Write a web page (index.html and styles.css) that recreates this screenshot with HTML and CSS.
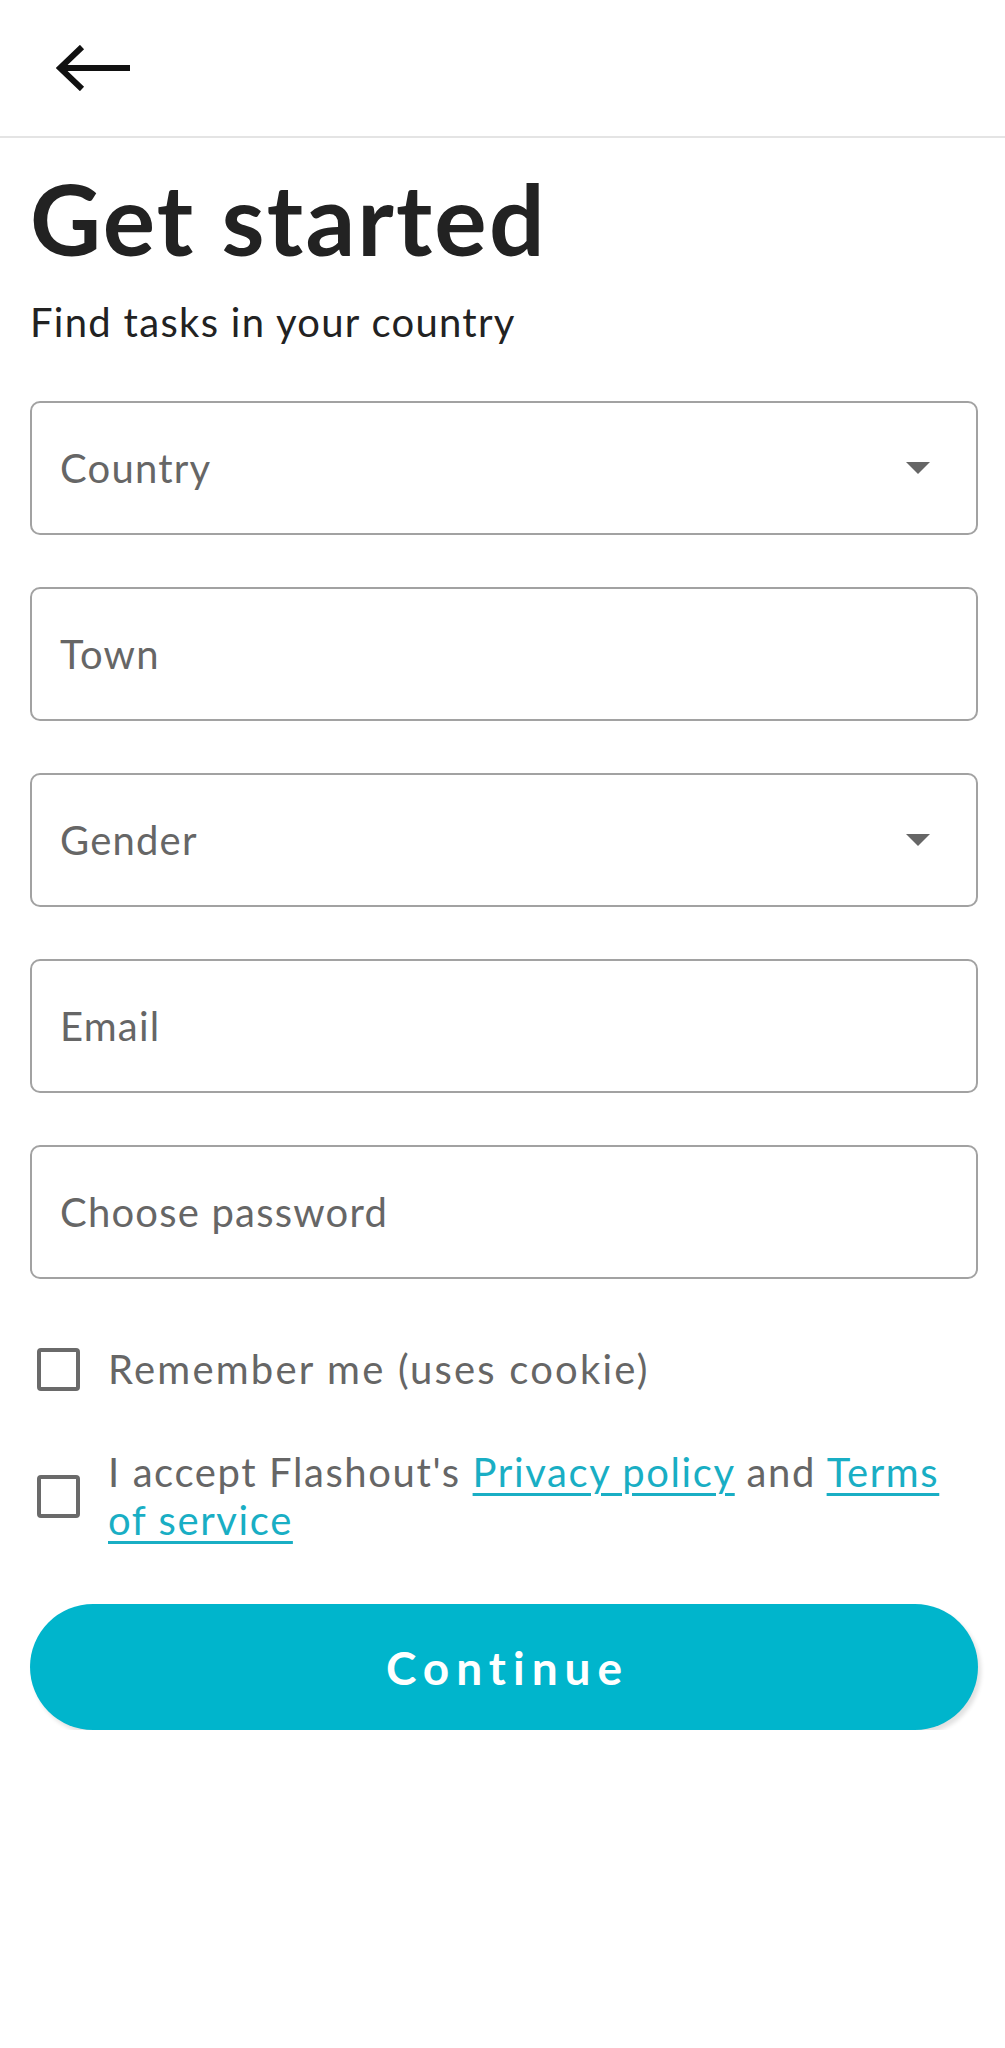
FILE: index.html
```html
<!DOCTYPE html>
<html lang="en">
<head>
<meta charset="utf-8">
<title>Get started</title>
<link rel="stylesheet" href="styles.css">
</head>
<body>
<header class="topbar">
  <button class="back" aria-label="Back">
    <svg width="74" height="46" viewBox="0 0 74 46" fill="none" stroke="#111" stroke-width="6" stroke-linecap="butt" stroke-linejoin="miter">
      <path d="M74 23H6"/>
      <path d="M26 2L4 23L26 44"/>
    </svg>
  </button>
</header>
<main class="content">
  <h1 class="title">Get started</h1>
  <p class="subtitle">Find tasks in your country</p>
  <form class="form">
    <div class="field select"><span class="placeholder">Country</span><span class="caret"></span></div>
    <div class="field"><span class="placeholder">Town</span></div>
    <div class="field select"><span class="placeholder">Gender</span><span class="caret"></span></div>
    <div class="field"><span class="placeholder">Email</span></div>
    <div class="field"><span class="placeholder">Choose password</span></div>
    <label class="check first"><span class="box"></span><span class="label">Remember me (uses cookie)</span></label>
    <label class="check second"><span class="box"></span><span class="label">I accept Flashout's <a href="#">Privacy policy</a> and <a href="#">Terms of service</a></span></label>
    <button type="button" class="continue">Continue</button>
  </form>
</main>
</body>
</html>
```
FILE: styles.css
```css
* { box-sizing: border-box; }
html, body { margin: 0; padding: 0; background: #fff; }
body { font-family: Lato, "Noto Sans", sans-serif; color: #222; }

.topbar {
  height: 138px;
  border-bottom: 2px solid #e4e4e4;
  display: flex;
  align-items: center;
  padding-left: 56px;
}
.back { background: none; border: 0; padding: 0; margin-top: 0; display: flex; }

.content { padding: 0 27px 0 30px; }

.title {
  margin: 26px 0 0;
  font-size: 98px;
  font-weight: 700;
  line-height: 108px;
  letter-spacing: 2.2px;
  color: #222;
}
.subtitle {
  margin: 26px 0 0;
  font-size: 40px;
  line-height: 48px;
  letter-spacing: 1.3px;
  color: #222;
}

.form { display: flex; flex-direction: column; margin-top: 55px; }

.field {
  height: 134px;
  border: 2px solid #a2a2a2;
  border-radius: 10px;
  display: flex;
  align-items: center;
  justify-content: space-between;
  padding: 0 46px 0 28px;
  margin-bottom: 52px;
}
.placeholder { font-size: 40px; letter-spacing: 1.2px; color: #666; }
.caret {
  width: 0; height: 0;
  border-left: 12px solid transparent;
  border-right: 12px solid transparent;
  border-top: 12px solid #666;
}

.check { display: flex; align-items: center; gap: 28px; padding-left: 7px; }
.check.first { margin-top: 14px; }
.check.second { margin-top: 55px; }
.box {
  flex: none;
  width: 43px; height: 43px;
  border: 4px solid #6a6a6a;
  border-radius: 4px;
}
.label { font-size: 40px; color: #666; line-height: 48px; letter-spacing: 1.6px; }
.check.first .label { letter-spacing: 2.2px; }
.label a { color: #19aec4; text-decoration: underline; text-underline-offset: 6px; text-decoration-thickness: 3px; }

.continue {
  margin-top: 60px;
  height: 126px;
  border: 0;
  border-radius: 63px;
  background: #00b5cc;
  color: #fff;
  font-family: Lato, sans-serif;
  font-weight: 700;
  font-size: 46px;
  letter-spacing: 7px;
  padding: 0 0 0 7px;
  box-shadow: 3px 4px 4px rgba(0,0,0,0.12);
}
```
